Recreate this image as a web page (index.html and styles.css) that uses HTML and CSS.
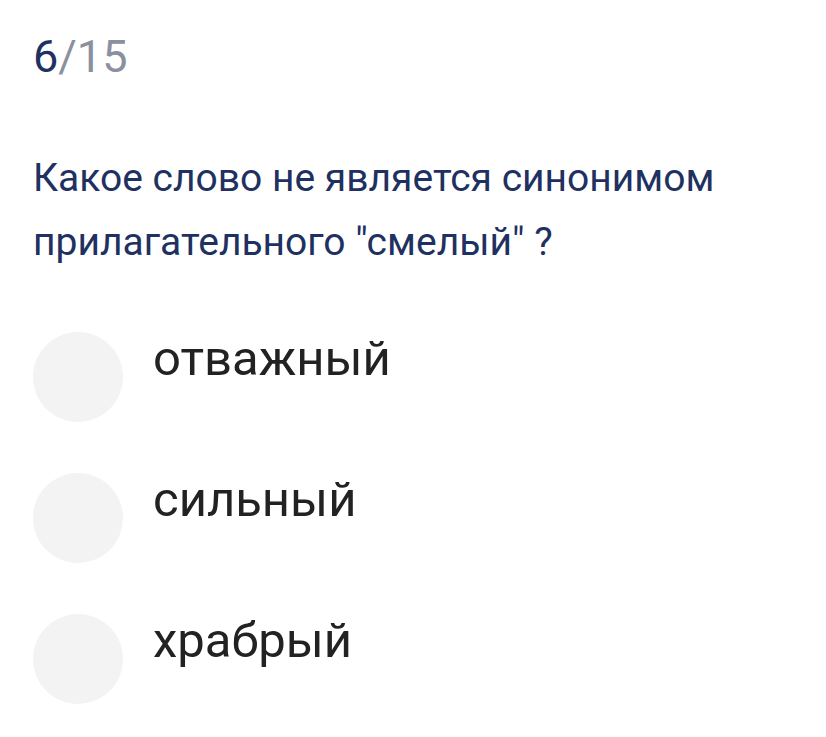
FILE: index.html
```html
<!DOCTYPE html>
<html>
    <head>
        <title>Вопрос</title>
        <meta charset="utf-8">
        <link rel="stylesheet" href="styles.css">
    </head>
    <body>
        <div id="quiz">
            <div class="counter"><span class="current">6</span>/15</div>
            <div class="question">Какое слово не является синонимом прилагательного "смелый" ?</div>
            <div class="answers">
                <div class="answer">
                    <div class="radio"></div>
                    <div class="answer_text">отважный</div>
                </div>
                <div class="answer">
                    <div class="radio"></div>
                    <div class="answer_text">сильный</div>
                </div>
                <div class="answer">
                    <div class="radio"></div>
                    <div class="answer_text">храбрый</div>
                </div>
            </div>
        </div>
    </body>
</html>
```

FILE: styles.css
```css
body {
    margin: 0;
    background: #ffffff;
    font-family: Roboto, "Liberation Sans", sans-serif;
}

#quiz {
    padding: 34px 33px 0 33px;
}

.counter {
    font-size: 45px;
    line-height: 45px;
    color: #8b909e;
}

.current {
    color: #1e3161;
}

.question {
    margin-top: 67px;
    width: 720px;
    font-size: 39px;
    line-height: 64px;
    color: #1e3161;
}

.answers {
    margin-top: 58px;
    display: flex;
    flex-direction: column;
    gap: 51px;
}

.answer {
    display: flex;
    align-items: flex-start;
    gap: 30px;
}

.radio {
    width: 90px;
    height: 90px;
    border-radius: 50%;
    background-color: #f3f3f3;
    flex-shrink: 0;
}

.answer_text {
    font-size: 49px;
    line-height: 54px;
    color: #222222;
}
```
